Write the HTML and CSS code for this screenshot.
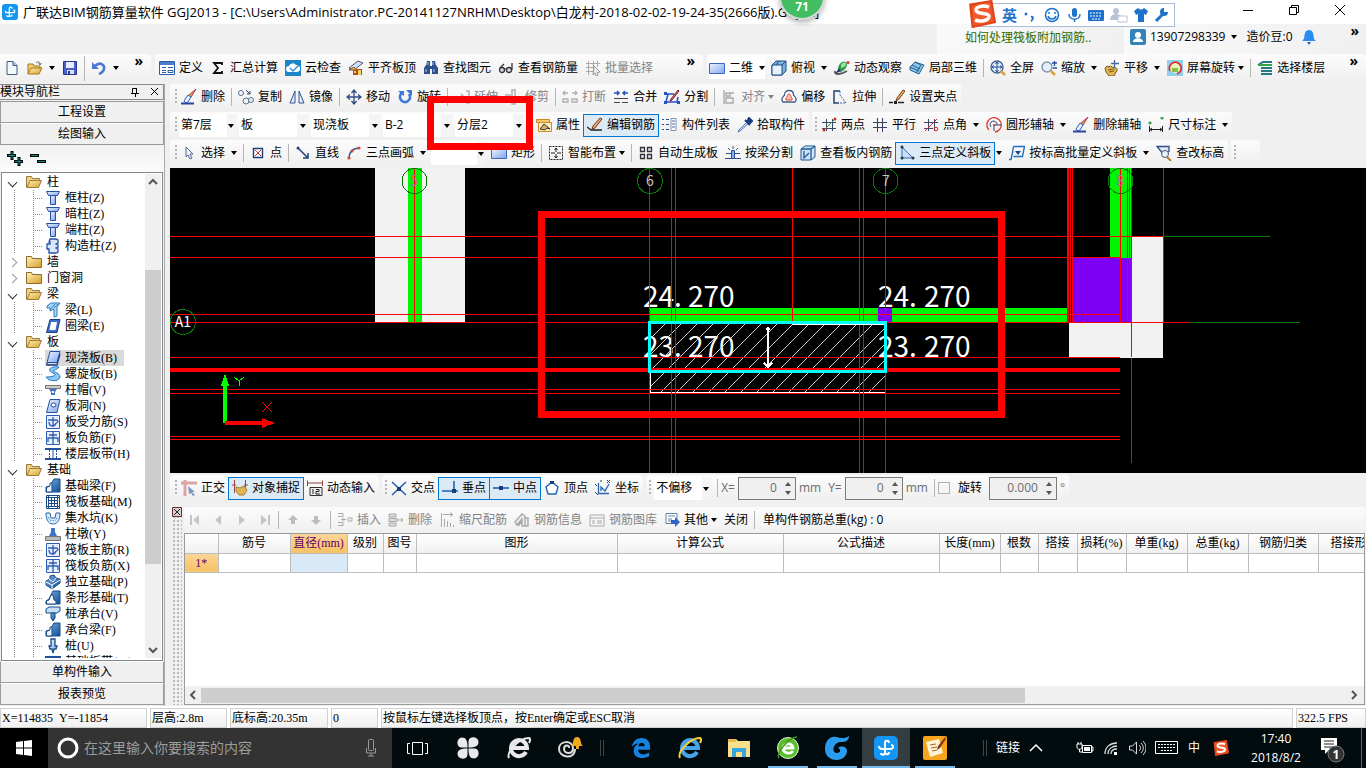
FILE: index.html
```html
<!DOCTYPE html>
<html lang="zh-CN">
<head>
<meta charset="utf-8">
<title>广联达BIM钢筋算量软件 GGJ2013</title>
<link rel="stylesheet" href="styles.css">
</head>
<body>
<svg class="defs" aria-hidden="true">
<defs>
<linearGradient id="gb" x1="0" y1="0" x2="1" y2="1"><stop offset="0" stop-color="#eef4ff"/><stop offset="1" stop-color="#7ea6ee"/></linearGradient>
<linearGradient id="gy" x1="0" y1="0" x2="1" y2="1"><stop offset="0" stop-color="#fff0b8"/><stop offset="1" stop-color="#d9a02c"/></linearGradient>
<linearGradient id="gd" x1="0" y1="0" x2="1" y2="1"><stop offset="0" stop-color="#7fb0e6"/><stop offset="1" stop-color="#124d94"/></linearGradient>
<symbol id="app" viewBox="0 0 24 24"><rect width="24" height="24" rx="5" fill="#1496f5"/><path d="M15 7c0-3-4-3-4 0v9c0 4-4 3-4 1M11 16c0 3 4 3 4 0M5 10c0 2 1 3 3 3h8c4 0 4-4 1-4" fill="none" stroke="#fff" stroke-width="2"/></symbol>
<symbol id="new" viewBox="0 0 16 16"><path d="M3 1.500h6l4 4v9H3z" fill="#f4f8ff" stroke="#41587f"/><path d="M9 1.500v4h4" fill="#b9cdec" stroke="#41587f"/></symbol>
<symbol id="open" viewBox="0 0 16 16"><path d="M1 14V4h5l1 2h6v3" fill="#f0cf74" stroke="#a87518"/><path d="M1 14l3-6h11l-3 6z" fill="url(#gy)" stroke="#a87518"/><path d="M9 3c2-2 4-1 4 1m-1.500-1l1.500 2 1.500-2" fill="none" stroke="#667"/></symbol>
<symbol id="save" viewBox="0 0 16 16"><path d="M1.500 1.500h13v13h-13z" fill="#4b5fc4" stroke="#27378f"/><path d="M4 2h8v6H4z" fill="#e6edff"/><path d="M5 10h7v4H5z" fill="#dde"/><path d="M6 11h2v3H6z" fill="#27378f"/></symbol>
<symbol id="undo" viewBox="0 0 16 16"><path d="M4 6c5-5 10-1 9 3-.5 3-3 4-5 5" fill="none" stroke="#4a76d4" stroke-width="2.500"/><path d="M1 2v7h7z" fill="#4a76d4"/></symbol>
<symbol id="define" viewBox="0 0 16 16"><path d="M.5 1.500h15v13H.5z" fill="#fff" stroke="#2f5da8"/><path d="M1 2h14v3H1z" fill="#4d7ccd"/><path d="M3 7.500h4M3 10.500h4M3 12.500h4M9 7.500h5M9 10.500h5v2H9z" stroke="#2f5da8" fill="none"/></symbol>
<symbol id="sigma" viewBox="0 0 16 16"><path d="M12 5V3H4l4 5-4 5h8v-2" fill="none" stroke="#111" stroke-width="1.800"/></symbol>
<symbol id="cloud" viewBox="0 0 16 16"><path d="M0 0h16v16H0z" fill="#1d84c9"/><path d="M4 12a3 3 0 0 1 0-6 4 4 0 0 1 7-1 3.500 3.500 0 0 1 1 7z" fill="#fff"/><path d="M5 8l3 3 6-6" fill="none" stroke="#2c91d6" stroke-width="1.500"/></symbol>
<symbol id="roof" viewBox="0 0 16 16"><path d="M1 8l9-7 5 2-9 7z" fill="#cfe0ff" stroke="#555"/><path d="M5 9h9v6H5z" fill="#b5471f"/><path d="M1 10l5-3 3 3z" fill="#e8b02e" stroke="#854"/><path d="M10 10h3v5h-3zM6 11h2v2H6z" fill="#f5d458"/></symbol>
<symbol id="find" viewBox="0 0 16 16"><path d="M4 1h3v5H3zM9 1h3l1 5H9zM1 8l2-3h4v9H1zM9 5h4l2 3v6H9zM6 6h4v3H6z" fill="#2d4f8e"/><path d="M3 9v3M11 9v3M5 2v3M10 2v3" stroke="#b7cdf2"/></symbol>
<symbol id="glass" viewBox="0 0 16 16"><path d="M2 8l4-4M14 3v7" stroke="#333" stroke-width="1.300" fill="none"/><circle cx="4" cy="10" r="2.500" fill="#dde" stroke="#333" stroke-width="1.300"/><circle cx="11" cy="10" r="2.500" fill="#dde" stroke="#333" stroke-width="1.300"/><path d="M6 9h3" stroke="#333"/></symbol>
<symbol id="batch" viewBox="0 0 16 16"><path d="M1 3.500h14M1 7.500h9M1 11.500h7M3.500 1v14M8.500 1v14M12.500 1v6" stroke="#aaa" fill="none"/><path d="M9 6l6 6-3 .5 1 3-2 .5-1-3-2 2z" fill="#eee" stroke="#999"/></symbol>
<symbol id="plane" viewBox="0 0 16 16"><path d="M.5 3.500h15v10H.5z" fill="url(#gb)" stroke="#3d66c2"/></symbol>
<symbol id="cube" viewBox="0 0 16 16"><path d="M1 5l4-4h10v10l-4 4H1z" fill="#79b2e0" stroke="#1d4f80"/><path d="M1 5h10v10H1z" fill="#e5f2fc" stroke="#1d4f80"/><path d="M11 5l4-4M5 5l3-4" stroke="#1d4f80"/></symbol>
<symbol id="orbit" viewBox="0 0 16 16"><path d="M4 9c0-5 5-9 8-7 3 3-1 9-6 10z" fill="#2fa04a"/><path d="M7 5c2-3 5-3 5-1s-2 3-5 4z" fill="#9be3a0"/><path d="M1 11c-1 5 7 3 12 0" stroke="#555" stroke-width="1.800" fill="none"/><path d="M1 14l4-6 2 3z" fill="#337"/><circle cx="14" cy="2.500" r="1.500" fill="#d33"/></symbol>
<symbol id="local" viewBox="0 0 16 16"><path d="M1 7l5-5 9 3-5 9-9-4z" fill="#8cc3e8" stroke="#24618f"/><path d="M3 5l8 4M6 2l6 3-5 8M1 7l9 4" stroke="#24618f" fill="none"/></symbol>
<symbol id="full" viewBox="0 0 16 16"><circle cx="7" cy="7" r="6" fill="#e4eefc" stroke="#46658f" stroke-width="1.400"/><path d="M11 11l4 4" stroke="#d9a23a" stroke-width="2.500"/><path d="M7 2v10M2 7h10M5.500 4L7 2l1.500 2M5.500 10L7 12l1.500-2M4 5.500L2 7l2 1.500M10 5.500L12 7l-2 1.500" stroke="#234f9b" fill="none"/></symbol>
<symbol id="zoomi" viewBox="0 0 16 16"><circle cx="6" cy="7" r="5" fill="#e4eefc" stroke="#8393aa" stroke-width="1.400"/><path d="M10 11l4 4" stroke="#d9a23a" stroke-width="2.500"/><path d="M11 3h5M13.500 1v5M12 8h4" stroke="#234f9b" stroke-width="1.300"/></symbol>
<symbol id="hand" viewBox="0 0 16 16"><path d="M1 8l2-2 2 1 1-1 2 1 4 1c2 1 1 3 0 4l-2 4H5L2 12z" fill="#dfb557" stroke="#7f5b16"/><path d="M10.500 0v8M7 3.500h8" stroke="#44689b" stroke-width="1.300"/><path d="M4 10l6-1M5 12l5-1" stroke="#7f5b16"/></symbol>
<symbol id="scr" viewBox="0 0 16 16"><path d="M0 0h16v16H0z" fill="#8fd0ef"/><circle cx="8" cy="8" r="5" fill="#e8f5b8"/><path d="M3 11A6 6 0 1 1 10 14" stroke="#e33131" stroke-width="1.800" fill="none"/><path d="M5 8h6v4H5z" fill="#8dbd3f"/></symbol>
<symbol id="floor" viewBox="0 0 16 16"><path d="M1 5l5-3h9M4 8h11M4 11h11M4 14h11" stroke="#27768a" stroke-width="2" fill="none"/><path d="M1 5h14" stroke="#38a046" stroke-width="2"/></symbol>
<symbol id="brush" viewBox="0 0 16 16"><path d="M15 0l-5 8-3-1z" fill="#f2a83d" stroke="#a34"/><path d="M10 8L7 6 3 12c1 2 3 2 4 1z" fill="#e8f0ff" stroke="#335fb5"/><path d="M0 14.500h13" stroke="#28479c" stroke-width="2"/></symbol>
<symbol id="copy" viewBox="0 0 16 16"><circle cx="3" cy="4" r="2.500" fill="none" stroke="#59728f"/><circle cx="8" cy="12" r="3" fill="none" stroke="#59728f"/><circle cx="13" cy="11" r="2.500" fill="#e6edf8" stroke="#59728f"/><path d="M8 1l4 4m0-3v3H9" fill="none" stroke="#26436d"/></symbol>
<symbol id="mirror" viewBox="0 0 16 16"><path d="M6 2v12H1zM10 2v12h5z" fill="#e5ecfb" stroke="#2f5499"/></symbol>
<symbol id="move" viewBox="0 0 16 16"><path d="M8 1v14M1 8h14M5.500 4L8 1l2.500 3M5.500 12L8 15l2.500-3M4 5.500L1 8l3 2.500M12 5.500L15 8l-3 2.500" fill="none" stroke="#2e4e83" stroke-width="1.300"/></symbol>
<symbol id="rot" viewBox="0 0 16 16"><path d="M5 4a5 5 0 1 0 7 1" fill="none" stroke="#3f78d8" stroke-width="2.800"/><path d="M9 1h6v6zM1 2h6v5z" fill="#3f78d8"/></symbol>
<symbol id="ext" viewBox="0 0 16 16"><path d="M0 8h10M7 5l3 3-3 3M12 2h3v12h-3" fill="none" stroke="#b0b0b0" stroke-width="1.500"/></symbol>
<symbol id="trim" viewBox="0 0 16 16"><path d="M0 6h5v3H0M7 1h3v14H7zM12 8h4" fill="none" stroke="#b0b0b0" stroke-width="1.500"/></symbol>
<symbol id="brk" viewBox="0 0 16 16"><path d="M1 4h5M10 4h5M3 2L1 4l2 2M13 2l2 2-2 2M1 10h5v3H1zM10 10h5v3h-5z" fill="none" stroke="#b0b0b0" stroke-width="1.300"/></symbol>
<symbol id="join" viewBox="0 0 16 16"><path d="M1 4h5M10 4h5M4 2l2 2-2 2M12 2l-2 2 2 2" fill="none" stroke="#2355b8" stroke-width="1.500"/><path d="M1 9.500h14M1 13.500h6M9 13.500h6" stroke="#444" fill="none"/></symbol>
<symbol id="split" viewBox="0 0 16 16"><path d="M1 5h9M1 13h14M4 5L2 13M14 8l-1 5" stroke="#2450c8" stroke-width="1.500" fill="none"/><path d="M14 1l-7 9-1 2 2-1 7-9z" fill="#f0a050" stroke="#713"/><path d="M0 3h3v3H0zM0 12h3v3H0zM13 12h3v3h-3z" fill="#2450c8"/></symbol>
<symbol id="align" viewBox="0 0 16 16"><path d="M3 1v14M5 9h7v5H5zM5 4h4v3H5zM13 4H9" fill="none" stroke="#aaa" stroke-width="1.400"/></symbol>
<symbol id="offset" viewBox="0 0 16 16"><path d="M2 13C-1 10 2 8 3.500 6c0-6 9-6 9 0C14 8 17 10 14 13z" fill="#fff" stroke="#3c5c8c" stroke-width="1.300"/><path d="M5 11c-1-2 1-2 1.500-4.500 0-2 3-2 3 0C10 9 12 9 11 11z" fill="#f8c5bc" stroke="#d94632"/></symbol>
<symbol id="stretch" viewBox="0 0 16 16"><path d="M8 2H2v12h5" fill="none" stroke="#23426f" stroke-width="1.500"/><path d="M8 2v4l6 8H8" fill="none" stroke="#3a69b0" stroke-dasharray="2 1"/></symbol>
<symbol id="pen" viewBox="0 0 16 16"><path d="M14 1L8 9l-1 3 3-2 6-8z" fill="#e8b35c" stroke="#7c3d20"/><path d="M0 13.500h4M9 13.500h6" stroke="#222" stroke-width="1.500"/><path d="M5 12h3v3H5z" fill="#222"/></symbol>
<symbol id="prop" viewBox="0 0 16 16"><path d="M.5 2.500h13v3H.5z" fill="#f8c870" stroke="#d08a20"/><path d="M2.500 5.500h13v9h-13z" fill="#ffeec2" stroke="#d08a20"/><path d="M4 12l4-5 6 5-3-1-2 2z" fill="#d8b269" stroke="#333"/></symbol>
<symbol id="edit" viewBox="0 0 16 16"><path d="M13 1L6 9 5 12l3-1 7-9z" fill="#efa46a" stroke="#77391d"/><path d="M0 10l4 3h11" fill="none" stroke="#222" stroke-width="1.300"/></symbol>
<symbol id="list" viewBox="0 0 16 16"><path d="M0 2.500h2M0 7.500h2M0 12.500h2M4 2.500h3M4 7.500h3M4 12.500h3" stroke="#2c4d86"/><path d="M9 1.500h5v12H9z" fill="#fff" stroke="#7d93b5"/><path d="M10 4h3M10 7h3M10 10h3" stroke="#48689c"/></symbol>
<symbol id="pick" viewBox="0 0 16 16"><path d="M10 5L2 13l-1 2 2-1 9-8" fill="#cfe3fb" stroke="#4b79b5"/><path d="M8 3l5 5M10 5l2-4 3 3-3 3z" stroke="#1f3e79" stroke-width="2" fill="#1f3e79"/></symbol>
<symbol id="two" viewBox="0 0 16 16"><path d="M5.500 2v12M11.500 2v12M1 5.500h14M1 11.500h14" stroke="#3a4a66"/><path d="M2 14L14 2" stroke="#1f9a30"/><circle cx="3" cy="13" r="1.500" fill="#d22"/><circle cx="14" cy="2" r="1.500" fill="#d22"/></symbol>
<symbol id="par" viewBox="0 0 16 16"><path d="M5.500 1v14M10.500 1v14M1 5.500h14M1 10.500h14" stroke="#34435f"/></symbol>
<symbol id="ang" viewBox="0 0 16 16"><path d="M5.500 2v12M11.500 2v12M1 5.500h14M1 11.500h9" stroke="#3a4a66"/><path d="M2 14L14 2" stroke="#d22"/><circle cx="13" cy="12" r="1.800" fill="none" stroke="#d22"/></symbol>
<symbol id="circ" viewBox="0 0 16 16"><path d="M3 13A7.200 7.200 0 1 1 9 15" fill="none" stroke="#dd3a32" stroke-width="1.300"/><path d="M8 8h7M8 8v6" stroke="#263f6b"/><path d="M5 10a3.500 3.500 0 1 1 6-2" fill="none" stroke="#263f6b"/><circle cx="8" cy="8" r="1" fill="#dd3a32"/></symbol>
<symbol id="dim" viewBox="0 0 16 16"><path d="M1.500 9v6M14.500 9v6M2 12.500h12" stroke="#222" fill="none"/><path d="M1 5h2v2H1zM13 0h2v2h-2z" fill="#42a05a" stroke="#42a05a"/><path d="M4 11l-2 1.500L4 14M12 11l2 1.500-2 1.500" fill="none" stroke="#222"/></symbol>
<symbol id="arrow" viewBox="0 0 16 16"><path d="M5 2v10l2-2 2 4 2-1-2-4h3z" fill="#eef3fb" stroke="#52688c"/></symbol>
<symbol id="pt" viewBox="0 0 16 16"><path d="M3.500 3.500h9v9h-9z" fill="#fff" stroke="#1e3c78" stroke-width="1.400"/><path d="M5 5l6 6M11 5l-6 6" stroke="#c33"/></symbol>
<symbol id="line" viewBox="0 0 16 16"><path d="M3 3l9 9M8 13h5V8" stroke="#20427d" stroke-width="1.500" fill="none"/><circle cx="3" cy="3" r="1.500" fill="#20427d"/></symbol>
<symbol id="arc" viewBox="0 0 16 16"><path d="M3 14C3 7 7 3 14 3" stroke="#3a5c92" stroke-width="1.500" fill="none"/><circle cx="3" cy="13" r="1.600" fill="#d34a3a"/><circle cx="6" cy="6" r="1.600" fill="#d34a3a"/><circle cx="13" cy="3" r="1.600" fill="#d34a3a"/></symbol>
<symbol id="smart" viewBox="0 0 16 16"><path d="M1.500 1.500h13v13h-13z" fill="none" stroke="#222" stroke-dasharray="2 1"/><path d="M8 3v4M8 9v4M3 8h4M9 8h4M6.500 5L8 3l1.500 2M6.500 11L8 13l1.500-2" stroke="#222" fill="none"/></symbol>
<symbol id="auto" viewBox="0 0 16 16"><path d="M2.500 2.500h4v4h-4zM9.500 2.500h4v4h-4zM2.500 9.500h4v4h-4zM9.500 9.500h4v4h-4z" fill="#dce9ff" stroke="#333" stroke-width="1.300"/></symbol>
<symbol id="beam" viewBox="0 0 16 16"><path d="M1 8.500h5M10 8.500h5M0 13.500h16" stroke="#2c4f94"/><path d="M6.500 5.500h3v8h-3z" fill="#8ab0ec" stroke="#2c4f94"/><path d="M3 3l2 2M13 3l-2 2M8 1v3" stroke="#2c4f94"/></symbol>
<symbol id="view" viewBox="0 0 16 16"><path d="M1 4l4-3h10v11l-4 3H1z" fill="#cfe2f7" stroke="#1e5a96"/><path d="M1 4h10v11M11 4l4-3M4 6v7l5-5" fill="none" stroke="#1e5a96" stroke-width="1.300"/></symbol>
<symbol id="slope" viewBox="0 0 16 16"><path d="M3 2v11h11z" fill="#c9defa" stroke="#3a6cb7"/><circle cx="3" cy="2" r="1.500" fill="#234"/><circle cx="3" cy="13" r="1.500" fill="#234"/><circle cx="14" cy="13" r="1.500" fill="#234"/></symbol>
<symbol id="lvl" viewBox="0 0 16 16"><path d="M4.500 1.500h11l-2 10h-9M4.500 1.500L3 10M0 14.500h2l2-9" fill="none" stroke="#2272c3" stroke-width="1.400"/><path d="M6 6h6l-3 4z" fill="#174a88"/></symbol>
<symbol id="chk" viewBox="0 0 16 16"><path d="M1 1.500h12v5L8 10z" fill="#dfe8f6" stroke="#32508a" stroke-width="1.300"/><circle cx="9" cy="9" r="3.500" fill="#e8f3ff" stroke="#556"/><path d="M11 12l4 4" stroke="#b3762a" stroke-width="2"/></symbol>
<symbol id="orth" viewBox="0 0 16 16"><path d="M0 3h16M4 0v16" stroke="#d9a5a5" stroke-width="3"/><path d="M7 6l7 6-3 0 3 3-2 1-2-3-2 1z" fill="#7f97bd"/></symbol>
<symbol id="snap" viewBox="0 0 16 16"><path d="M2.500 0v13M13.500 0v10M0 5h4M12 5h4" stroke="#944" fill="none"/><path d="M4 7l4 1 4-2 3 4-3 5H7l-3-4z" fill="#dfb557" stroke="#a88030"/></symbol>
<symbol id="dyn" viewBox="0 0 16 16"><path d="M.5 6V.5M15.500 6V.5M1 3h14" stroke="#844" fill="none"/><path d="M3 7.500h12v8H3z" fill="#eee" stroke="#333"/><path d="M6 9v5M9 9.500h3v2H9V14h4" stroke="#222" fill="none"/></symbol>
<symbol id="ix" viewBox="0 0 16 16"><path d="M1 2l14 13M15 2L1 15" stroke="#2463b4" stroke-width="1.600"/><path d="M6 7h4v4H6z" fill="#183d7a"/></symbol>
<symbol id="perp" viewBox="0 0 16 16"><path d="M0 11h16M12 1v11" stroke="#2463b4" stroke-width="1.600"/><path d="M10 9h4v4h-4z" fill="#183d7a"/></symbol>
<symbol id="mid" viewBox="0 0 16 16"><path d="M0 8h16" stroke="#2463b4" stroke-width="1.600"/><path d="M6 6h4v4H6z" fill="#183d7a"/></symbol>
<symbol id="vert" viewBox="0 0 16 16"><path d="M8 2l6 5-2 7H4L2 7z" fill="#fff" stroke="#2463b4" stroke-width="1.400"/><path d="M6 1h4v3H6z" fill="#183d7a"/></symbol>
<symbol id="coord" viewBox="0 0 16 16"><path d="M3.500 3v10.500H14M6 11V7l4 4 4-7" fill="none" stroke="#2463b4" stroke-width="1.300"/><path d="M12 0l3 3M15 0l-3 3M0 4l2 2M0 12l3 3M6 0v2" stroke="#345"/></symbol>
<symbol id="first" viewBox="0 0 16 16"><path d="M3 3h2v10H3zM12 3v10L6 8z" fill="#c4c4c4"/></symbol>
<symbol id="prev" viewBox="0 0 16 16"><path d="M11 3v10L5 8z" fill="#c4c4c4"/></symbol>
<symbol id="next" viewBox="0 0 16 16"><path d="M6 3v10l6-5z" fill="#c4c4c4"/></symbol>
<symbol id="last" viewBox="0 0 16 16"><path d="M12 3h2v10h-2zM5 3v10l6-5z" fill="#c4c4c4"/></symbol>
<symbol id="up" viewBox="0 0 16 16"><path d="M8 3l5 5h-3v4H6V8H3z" fill="#bdbdbd"/></symbol>
<symbol id="down" viewBox="0 0 16 16"><path d="M8 13l5-5h-3V4H6v4H3z" fill="#bdbdbd"/></symbol>
<symbol id="ins" viewBox="0 0 16 16"><path d="M1 1.500h5v3H1M1 10.500h5v3H1M4 7.500h5m-2-2l-2 2 2 2M11 6h4v3h-4z" fill="none" stroke="#aaa"/></symbol>
<symbol id="del" viewBox="0 0 16 16"><path d="M1 2h7v3H1zM1 11h7v3H1zM1 6.500h8v3H1z" fill="#ddd" stroke="#aaa"/><path d="M9 8h6m-2-2l2 2-2 2" fill="none" stroke="#aaa"/></symbol>
<symbol id="scale" viewBox="0 0 16 16"><path d="M2.500 1v14M4 2.500h10m-3-2l3 2-3 2M5.500 7v8M8.500 9v6M11.500 11v4M14.500 13v2" fill="none" stroke="#aaa"/></symbol>
<symbol id="info" viewBox="0 0 16 16"><path d="M1 10L8 2l3 2v10H8V7l-5 6zM4 14L8 9M11 6h3v8h-3" fill="#eee" stroke="#aaa" stroke-width="1.400"/></symbol>
<symbol id="lib" viewBox="0 0 16 16"><path d="M1 3h14v11H1zM1 6h14M3 9h3M8 9h5M3 11h3M8 11h5" fill="none" stroke="#aaa"/></symbol>
<symbol id="other" viewBox="0 0 16 16"><path d="M2 1.500h11v10H2zM4 4h7M4 7h4M4 9h4" fill="#fff" stroke="#6680a5"/><path d="M7 8h4V5l5 5-5 5v-3H7z" fill="#2f63c5"/></symbol>
<symbol id="fo" viewBox="0 0 16 16"><path d="M.5 13.500v-11h5l1 2h7v3" fill="#ecd08a" stroke="#9a7a35"/><path d="M1 13.500l3-7h11.500l-3 7z" fill="url(#gy)" stroke="#9a7a35"/></symbol>
<symbol id="fc" viewBox="0 0 16 16"><path d="M.5 13.500v-11h5l1 2h9v9z" fill="url(#gy)" stroke="#8c6c2a"/></symbol>
<symbol id="col" viewBox="0 0 16 16"><path d="M1.500 1.500h13l-2 4h-9z" fill="url(#gb)" stroke="#2450a0"/><path d="M5.500 5.500h5v9h-5z" fill="url(#gb)" stroke="#2450a0"/></symbol>
<symbol id="gz" viewBox="0 0 16 16"><path d="M5 1h6l2 1v3l-2 1 2 1v2l-2 1 2 1v3l-2 1H4v-4H2V6h3V4H4z" fill="#dbe6fa" stroke="#2450a0" stroke-width="1.300"/></symbol>
<symbol id="liang" viewBox="0 0 16 16"><path d="M2 4l4-3h9l-3 4v9l-3 1V7L5 9V6H2z" fill="#a8d6f5" stroke="#2b7fc4"/><path d="M5 8l5-6M9 6l4-4" stroke="#2b7fc4"/></symbol>
<symbol id="ring" viewBox="0 0 16 16"><path d="M5 1.500h10l-3 13H1.500z" fill="#3f6fc4" stroke="#173e8c"/><path d="M6 4h6l-1.500 8H4.500z" fill="#fff"/></symbol>
<symbol id="slab" viewBox="0 0 16 16"><path d="M5 1.500h10l-3 11H2z" fill="url(#gb)" stroke="#2450a0"/><path d="M2 13v2h10l3-11" fill="none" stroke="#173e8c" stroke-width="1.300"/></symbol>
<symbol id="spiral" viewBox="0 0 16 16"><path d="M14 1C7 0 2 3 6 6l4 2c1 2-4 3-9 3 3 5 13 5 14 0 0-4-6-5-7-6 0-1 4-1 6-4z" fill="#8cc9f2" stroke="#2674bc"/></symbol>
<symbol id="cap" viewBox="0 0 16 16"><path d="M.5 3.500h15v3H.500z" fill="#ccc" stroke="#777"/><path d="M4 7h8l-2 3v3H6v-3z" fill="#3e73ca"/><path d="M7 9h2v2H7z" fill="#fff"/></symbol>
<symbol id="hole" viewBox="0 0 16 16"><path d="M5 1.500h10l-3 13H1.500z" fill="url(#gb)" stroke="#2450a0"/><ellipse cx="8.500" cy="7" rx="2.500" ry="2" fill="#fff" stroke="#2450a0"/></symbol>
<symbol id="bar1" viewBox="0 0 16 16"><path d="M1.500 1.500h13v13h-13z" fill="#e8f0fe" stroke="#2d5cb5"/><path d="M8 3v10M3 6h8c3 0 2 3 0 3M4 8c0 5 6 5 7 1" fill="none" stroke="#2d5cb5" stroke-width="1.300"/></symbol>
<symbol id="bar2" viewBox="0 0 16 16"><path d="M1.500 1.500h13v13h-13z" fill="#e8f0fe" stroke="#2d5cb5"/><path d="M8 2v12M4 5h8M3 12V8h10v4" fill="none" stroke="#2d5cb5" stroke-width="1.300"/></symbol>
<symbol id="strip" viewBox="0 0 16 16"><path d="M0 3h16M0 13h16" stroke="#2450a0" stroke-width="2"/><path d="M4.500 4v8M11.500 4v8" stroke="#2450a0" stroke-dasharray="2 1"/><path d="M8 4v8" stroke="#2450a0"/></symbol>
<symbol id="fb" viewBox="0 0 16 16"><path d="M1 14V9l4-1 4-7h6v13z" fill="url(#gd)" stroke="#164b88"/><path d="M1.500 14V9.500L5 8v-3h2v9z" fill="#e9f2fd" stroke="#164b88"/></symbol>
<symbol id="raft" viewBox="0 0 16 16"><path d="M1.500 1.500h13v13h-13z" fill="#fff" stroke="#164b88"/><path d="M3.500 1v14M12.500 1v14M1 3.500h14M1 12.500h14M6.500 4v8M9.500 4v8M4 6.500h8M4 9.500h8" stroke="#164b88" fill="none"/></symbol>
<symbol id="pit" viewBox="0 0 16 16"><path d="M1 3h4l1 5h4l1-5h4c0 6-2 11-7 11S1 9 1 3z" fill="#d8ebfa" stroke="#2867b0"/><path d="M3 7l3 4M8 10v2M12 8l-2 3" stroke="#2867b0" stroke-dasharray="1 1"/></symbol>
<symbol id="pier" viewBox="0 0 16 16"><path d="M.5 10.500h15v4H.5z" fill="#bbb" stroke="#777"/><path d="M6 2h4v4l2 4H4l2-4z" fill="#3e73ca"/></symbol>
<symbol id="iso" viewBox="0 0 16 16"><path d="M1 7l4-2V2l4-1 2 3 4 1v4l-8 6-6-4z" fill="url(#gd)" stroke="#164b88"/><path d="M1 8l6 3 8-5M7 11v4M4 5l4 3 3-4" stroke="#fff" fill="none"/></symbol>
<symbol id="tf" viewBox="0 0 16 16"><path d="M1 14v-3l3-2 4-8h7v13z" fill="url(#gd)" stroke="#164b88"/><path d="M1.500 14v-3L4 10l2-5h2l1 5 2 1v3z" fill="#fff" stroke="#164b88"/></symbol>
<symbol id="pilecap" viewBox="0 0 16 16"><path d="M1 3l3-2h11v4l-3 2H1z" fill="#c6dcf6" stroke="#164b88"/><path d="M6 7h4v5l-2 3-2-3z" fill="url(#gd)" stroke="#164b88"/></symbol>
<symbol id="pile" viewBox="0 0 16 16"><path d="M6 1h4v7h2l-1 3H9l-1 4-1-4H5L4 8h2z" fill="url(#gb)" stroke="#164b88" stroke-width="1.300"/></symbol>
<symbol id="sogou" viewBox="0 0 24 24"><path d="M2 4L20 1l3 18-19 4z" fill="#f1582a" stroke="#e2451b" stroke-width="2"/><path d="M18 6c-6-2-12 0-11 3 1 4 11 1 11 5 0 4-8 5-12 3" fill="none" stroke="#fff" stroke-width="3"/></symbol>
<symbol id="ie" viewBox="0 0 24 24"><path d="M19 16a8 8 0 1 1 1-4H6" fill="none" stroke="currentColor" stroke-width="4"/><path d="M2 22C-1 16 12 2 22 2c2 1 1 3 0 5" fill="none" stroke="var(--ring,currentColor)" stroke-width="2"/></symbol>
<symbol id="edge" viewBox="0 0 24 24"><path d="M2 11C3 3 9 1 13 1c6 0 9 4 9 11v2H9c0 6 7 6 12 3v4c-8 4-17 2-17-6 0-4 2-6 5-8C6 7 3 9 2 11zm7-1h7c0-5-6-5-7 0z" fill="#1683e0"/></symbol>
</defs>
</svg>

<div class="window">
<header class="titlebar">
  <svg class="i"><use href="#app"/></svg>
  <h1>广联达BIM钢筋算量软件 GGJ2013 - [C:\Users\Administrator.PC-20141127NRHM\Desktop\白龙村-2018-02-02-19-24-35(2666版).GGJ12]</h1>
  <span class="speed">71</span>
  <div class="ime">
    <svg class="ime-logo"><use href="#sogou"/></svg>
    <b>英</b>
    <svg width="16" height="16"><circle cx="4" cy="7" r="1.500" fill="#1d73c9"/><path d="M9 10c3-1 2 3 0 4" stroke="#1d73c9" stroke-width="2" fill="none"/></svg>
    <svg width="18" height="16"><circle cx="9" cy="8" r="6.500" fill="none" stroke="#1d73c9" stroke-width="1.500"/><path d="M6 5v2M12 5v2M5 9c1 4 7 4 8 0" fill="none" stroke="#1d73c9" stroke-width="1.500"/></svg>
    <svg width="16" height="16"><rect x="6" y="1" width="5" height="9" rx="2.500" fill="#1d73c9"/><path d="M3 7c0 7 11 7 11 0M8.500 12v3" stroke="#1d73c9" stroke-width="1.500" fill="none"/></svg>
    <svg width="18" height="16"><rect x="1" y="3" width="16" height="11" rx="1" fill="#1d73c9"/><path d="M3 6h12M3 9h12M5 12h8" stroke="#fff" stroke-dasharray="2 1"/></svg>
    <svg width="18" height="16"><circle cx="6" cy="4" r="3" fill="#b9c3d3"/><path d="M0 13c0-8 12-8 12 0z" fill="#b9c3d3"/><path d="M8 9h9v6H8z" fill="#fff" stroke="#b9c3d3"/></svg>
    <svg width="16" height="16"><path d="M1 4l4-3c2 2 4 2 6 0l4 3-2 4-2-1v8H5V7L3 8z" fill="#1d73c9"/></svg>
    <svg width="16" height="16"><path d="M2 14l7-7" stroke="#1d73c9" stroke-width="3"/><path d="M14 5a4 4 0 1 1-4-4L10 5z" fill="#1d73c9"/></svg>
  </div>
  <div class="winbtns">
    <button aria-label="最小化"><svg width="12" height="12"><path d="M1 6.500h10" stroke="#000"/></svg></button>
    <button aria-label="还原"><svg width="12" height="12"><path d="M1.500 3.500h7v7h-7zM3.500 3V1.500h7v7H9" stroke="#000" fill="none"/></svg></button>
    <button aria-label="关闭"><svg width="12" height="12"><path d="M1 1l10 10M11 1L1 11" stroke="#000" fill="none"/></svg></button>
  </div>
</header>

<div class="account">
  <a class="tip" href="#">如何处理筏板附加钢筋..</a>
  <div class="user">
    <svg class="i" viewBox="0 0 16 16"><rect width="16" height="16" rx="2" fill="#3483b8"/><circle cx="8" cy="6" r="3" fill="#fff"/><path d="M3 13c0-5 10-5 10 0z" fill="#fff"/></svg>
    <button class="t drop">13907298339</button>
    <span>造价豆:0</span>
    <svg class="i" viewBox="0 0 16 16"><path d="M1 12c3-2 2-5 3-8 1-4 7-4 8 0 1 3 0 6 3 8z" fill="#2b8cf0"/><path d="M6 13h4l-2 3z" fill="#2465b5"/></svg>
    <button class="more">»</button>
  </div>
</div>

<div class="mainbar">
  <div class="tb file">
    <button class="t" aria-label="新建"><svg class="i"><use href="#new"/></svg></button>
    <button class="t drop" aria-label="打开"><svg class="i"><use href="#open"/></svg></button>
    <button class="t" aria-label="保存"><svg class="i"><use href="#save"/></svg></button>
    <i class="sep"></i>
    <button class="t drop" aria-label="撤销"><svg class="i"><use href="#undo"/></svg></button>
    <button class="more">»</button>
  </div>
  <div class="tb tools">
    <button class="t"><svg class="i"><use href="#define"/></svg>定义</button>
    <button class="t"><svg class="i"><use href="#sigma"/></svg>汇总计算</button>
    <button class="t"><svg class="i"><use href="#cloud"/></svg>云检查</button>
    <button class="t"><svg class="i"><use href="#roof"/></svg>平齐板顶</button>
    <button class="t"><svg class="i"><use href="#find"/></svg>查找图元</button>
    <button class="t"><svg class="i"><use href="#glass"/></svg>查看钢筋量</button>
    <button class="t off"><svg class="i"><use href="#batch"/></svg>批量选择</button>
    <button class="more">»</button>
  </div>
  <div class="tb views">
    <button class="t drop white"><svg class="i"><use href="#plane"/></svg>二维</button>
    <button class="t drop"><svg class="i"><use href="#cube"/></svg>俯视</button>
    <button class="t"><svg class="i"><use href="#orbit"/></svg>动态观察</button>
    <button class="t"><svg class="i"><use href="#local"/></svg>局部三维</button>
    <i class="sep"></i>
    <button class="t"><svg class="i"><use href="#full"/></svg>全屏</button>
    <button class="t drop"><svg class="i"><use href="#zoomi"/></svg>缩放</button>
    <button class="t drop"><svg class="i"><use href="#hand"/></svg>平移</button>
    <button class="t drop tight"><svg class="i"><use href="#scr"/></svg>屏幕旋转</button>
    <i class="sep"></i>
    <button class="t"><svg class="i"><use href="#floor"/></svg>选择楼层</button>
    <button class="more">»</button>
  </div>
</div>

<div class="body">
<aside class="nav">
  <div class="nav-head"><h2>模块导航栏</h2>
    <button aria-label="固定"><svg width="10" height="10"><path d="M2.500 6V1.500h4V6M1 6.500h8M5.500 7v3M6.500 1v5" stroke="#000" fill="none"/></svg></button>
    <button aria-label="关闭"><svg width="10" height="10"><path d="M1 1l7 7M8 1L1 8" stroke="#000" fill="none"/></svg></button>
  </div>
  <button class="tab">工程设置</button>
  <button class="tab">绘图输入</button>
  <div class="treebar">
    <button aria-label="全部展开"><svg width="18" height="16"><path d="M5 0v9M0 4.500h9M12 6v9M7 10.500h9" stroke="#000" stroke-width="3"/><path d="M5 1v7M1 4.500h7M12 7v7M8 10.500h7" stroke="#0a8a80"/></svg></button>
    <button aria-label="全部折叠"><svg width="18" height="16"><path d="M1 4.500h9M8 10.500h9" stroke="#000" stroke-width="3"/><path d="M2 4.500h7M9 10.500h7" stroke="#0a8a80"/></svg></button>
  </div>
  <div class="treebox">
    <div class="tree">
      <div class="g open"><svg class="i"><use href="#fo"/></svg>柱</div>
      <ul>
        <li><svg class="i"><use href="#col"/></svg>框柱(Z)</li>
        <li><svg class="i"><use href="#col"/></svg>暗柱(Z)</li>
        <li><svg class="i"><use href="#col"/></svg>端柱(Z)</li>
        <li><svg class="i"><use href="#gz"/></svg>构造柱(Z)</li>
      </ul>
      <div class="g"><svg class="i"><use href="#fc"/></svg>墙</div>
      <div class="g"><svg class="i"><use href="#fc"/></svg>门窗洞</div>
      <div class="g open"><svg class="i"><use href="#fo"/></svg>梁</div>
      <ul>
        <li><svg class="i"><use href="#liang"/></svg>梁(L)</li>
        <li><svg class="i"><use href="#ring"/></svg>圈梁(E)</li>
      </ul>
      <div class="g open"><svg class="i"><use href="#fo"/></svg>板</div>
      <ul>
        <li><span class="cur"><svg class="i"><use href="#slab"/></svg>现浇板(B)</span></li>
        <li><svg class="i"><use href="#spiral"/></svg>螺旋板(B)</li>
        <li><svg class="i"><use href="#cap"/></svg>柱帽(V)</li>
        <li><svg class="i"><use href="#hole"/></svg>板洞(N)</li>
        <li><svg class="i"><use href="#bar1"/></svg>板受力筋(S)</li>
        <li><svg class="i"><use href="#bar2"/></svg>板负筋(F)</li>
        <li><svg class="i"><use href="#strip"/></svg>楼层板带(H)</li>
      </ul>
      <div class="g open"><svg class="i"><use href="#fo"/></svg>基础</div>
      <ul>
        <li><svg class="i"><use href="#fb"/></svg>基础梁(F)</li>
        <li><svg class="i"><use href="#raft"/></svg>筏板基础(M)</li>
        <li><svg class="i"><use href="#pit"/></svg>集水坑(K)</li>
        <li><svg class="i"><use href="#pier"/></svg>柱墩(Y)</li>
        <li><svg class="i"><use href="#bar1"/></svg>筏板主筋(R)</li>
        <li><svg class="i"><use href="#bar2"/></svg>筏板负筋(X)</li>
        <li><svg class="i"><use href="#iso"/></svg>独立基础(P)</li>
        <li><svg class="i"><use href="#tf"/></svg>条形基础(T)</li>
        <li><svg class="i"><use href="#pilecap"/></svg>桩承台(V)</li>
        <li><svg class="i"><use href="#fb"/></svg>承台梁(F)</li>
        <li><svg class="i"><use href="#pile"/></svg>桩(U)</li>
        <li><svg class="i"><use href="#strip"/></svg>基础板带(W)</li>
      </ul>
    </div>
    <div class="vscroll">
      <svg width="16" height="16"><path d="M4 10l4-4 4 4" fill="none" stroke="#555" stroke-width="2"/></svg>
      <div class="vtrack"><div class="vthumb"></div></div>
      <svg width="16" height="16"><path d="M4 6l4 4 4-4" fill="none" stroke="#555" stroke-width="2"/></svg>
    </div>
  </div>
  <button class="tab">单构件输入</button>
  <button class="tab">报表预览</button>
</aside>

<main class="work">
<div class="bars">
  <div class="row">
    <div class="tb"><i class="grip"></i>
      <button class="t"><svg class="i"><use href="#brush"/></svg>删除</button>
      <i class="sep"></i>
      <button class="t"><svg class="i"><use href="#copy"/></svg>复制</button>
      <button class="t"><svg class="i"><use href="#mirror"/></svg>镜像</button>
      <i class="sep"></i>
      <button class="t"><svg class="i"><use href="#move"/></svg>移动</button>
      <button class="t"><svg class="i"><use href="#rot"/></svg>旋转</button>
      <i class="sep"></i>
      <button class="t off"><svg class="i"><use href="#ext"/></svg>延伸</button>
      <button class="t off"><svg class="i"><use href="#trim"/></svg>修剪</button>
      <i class="sep"></i>
      <button class="t off"><svg class="i"><use href="#brk"/></svg>打断</button>
      <button class="t"><svg class="i"><use href="#join"/></svg>合并</button>
      <button class="t"><svg class="i"><use href="#split"/></svg>分割</button>
      <i class="sep"></i>
      <button class="t off drop tight"><svg class="i"><use href="#align"/></svg>对齐</button>
      <button class="t"><svg class="i"><use href="#offset"/></svg>偏移</button>
      <button class="t"><svg class="i"><use href="#stretch"/></svg>拉伸</button>
      <i class="sep"></i>
      <button class="t"><svg class="i"><use href="#pen"/></svg>设置夹点</button>
    </div>
  </div>
  <div class="row">
    <div class="tb"><i class="grip"></i>
      <div class="combos">
        <span class="combo short"><select aria-label="楼层"><option>第7层</option></select></span>
        <span class="combo"><select aria-label="构件类型"><option>板</option></select></span>
        <span class="combo"><select aria-label="构件"><option>现浇板</option></select></span>
        <span class="combo"><select aria-label="名称"><option>B-2</option></select></span>
        <span class="combo"><select aria-label="分层"><option>分层2</option></select></span>
      </div>
      <button class="t"><svg class="i"><use href="#prop"/></svg>属性</button>
      <button class="t on"><svg class="i"><use href="#edit"/></svg>编辑钢筋</button>
      <button class="t"><svg class="i"><use href="#list"/></svg>构件列表</button>
      <button class="t"><svg class="i"><use href="#pick"/></svg>拾取构件</button>
    </div>
    <div class="tb"><i class="grip"></i>
      <button class="t"><svg class="i"><use href="#two"/></svg>两点</button>
      <button class="t"><svg class="i"><use href="#par"/></svg>平行</button>
      <button class="t drop"><svg class="i"><use href="#ang"/></svg>点角</button>
      <button class="t drop"><svg class="i"><use href="#circ"/></svg>圆形辅轴</button>
      <button class="t"><svg class="i"><use href="#brush"/></svg>删除辅轴</button>
      <button class="t drop"><svg class="i"><use href="#dim"/></svg>尺寸标注</button>
    </div>
  </div>
  <div class="row">
    <div class="tb"><i class="grip"></i>
      <button class="t drop"><svg class="i"><use href="#arrow"/></svg>选择</button>
      <i class="sep"></i>
      <button class="t"><svg class="i"><use href="#pt"/></svg>点</button>
      <i class="sep"></i>
      <button class="t"><svg class="i"><use href="#line"/></svg>直线</button>
      <button class="t drop"><svg class="i"><use href="#arc"/></svg>三点画弧</button>
      <span class="combo blank"><select aria-label="画法"><option></option></select></span>
      <button class="t"><svg class="i"><use href="#plane"/></svg>矩形</button>
      <i class="sep"></i>
      <button class="t drop tight"><svg class="i"><use href="#smart"/></svg>智能布置</button>
      <i class="sep"></i>
      <button class="t"><svg class="i"><use href="#auto"/></svg>自动生成板</button>
      <button class="t"><svg class="i"><use href="#beam"/></svg>按梁分割</button>
      <button class="t"><svg class="i"><use href="#view"/></svg>查看板内钢筋</button>
      <button class="t on"><svg class="i"><use href="#slope"/></svg>三点定义斜板</button>
      <button class="t drop only" aria-label="更多斜板"></button>
      <button class="t drop"><svg class="i"><use href="#lvl"/></svg>按标高批量定义斜板</button>
      <button class="t"><svg class="i"><use href="#chk"/></svg>查改标高</button>
    </div>
    <div class="tb stub"><i class="grip"></i></div>
  </div>
  <div class="mark"></div>
</div>

<svg class="canvas" viewBox="170 168 1196 305" preserveAspectRatio="xMinYMin slice" shape-rendering="crispEdges">
  <defs><pattern id="hatch" width="16" height="16" patternUnits="userSpaceOnUse" x="650" y="323"><path d="M0 16L16 0" stroke="#d0d0d0" fill="none"/></pattern></defs>
  <rect x="170" y="168" width="2400" height="600" fill="#000"/>
  <g fill="#f2f2f2"><rect x="375" y="168" width="90" height="154"/><rect x="1132" y="237" width="31" height="86"/><rect x="1069" y="323" width="94" height="35"/></g>
  <g fill="#00f500"><rect x="408" y="168" width="14" height="154"/><rect x="1110" y="168" width="22" height="90"/><rect x="650" y="308" width="418" height="14"/></g>
  <g fill="#7d00f5"><rect x="1072" y="258" width="60" height="64"/><rect x="878" y="308" width="14" height="14"/></g>
  <g fill="#fff" font-family="'Noto Sans CJK SC',sans-serif" font-size="28">
    <text x="643" y="307">24.</text><text x="688" y="307">270</text>
    <text x="643" y="357">23.</text><text x="688" y="357">270</text>
    <text x="878" y="307">24.</text><text x="924" y="307">270</text>
    <text x="878" y="357">23.</text><text x="924" y="357">270</text>
  </g>
  <path d="M650.500 323.500h235v69h-235z" fill="url(#hatch)" stroke="#fff"/>
  <g stroke="#f00" fill="none">
    <path d="M170 236.500H1163M170 257.500H1120M170 314.500H1120M170 322.500H1190M170 357.500H1120M170 389.500H1120M170 393.500H1120M170 436.500H1120M170 439.500H1120"/>
    <path d="M170 370H1120" stroke-width="4"/>
    <path d="M414.500 168V322M649.500 168V393M671.500 168V393M675.500 168V393M792.500 168V322M859.500 168V393M863.500 168V393M885.500 168V393M1070.500 168V322M1072.500 168V322M1120.500 168V322M1127.500 168V322M1129.500 168V322M1131.500 168V357M1163.500 168V322"/>
    <path d="M1068 168V322" stroke-width="2"/>
  </g>
  <g stroke="#087808" fill="none">
    <path d="M1164 236.500H1270M1190 322.500H1300M649.500 394V473M671.500 394V473M675.500 394V473M859.500 394V473M863.500 394V473M885.500 394V473M1131.500 358V463"/>
    <circle cx="414.500" cy="181" r="12.500"/><circle cx="650" cy="181" r="12.500"/><circle cx="885.500" cy="181" r="12.500"/><circle cx="1120.500" cy="181" r="12.500"/><circle cx="183" cy="322" r="12.500"/>
  </g>
  <g font-family="'Noto Sans CJK SC',sans-serif" font-size="14" text-anchor="middle" fill="#c8c8c8">
    <text x="414" y="186" fill="#b06ab0">5</text><text x="650" y="186">6</text><text x="886" y="186">7</text><text x="1120" y="186" fill="#b06ab0">8</text><text x="183" y="327" fill="#fff">A1</text>
  </g>
  <path d="M649.500 322.500H885.500V371.500H649.500z" fill="none" stroke="#0ff" stroke-width="3"/>
  <path d="M792 324.500h92" stroke="#fff"/>
  <path d="M768 327v38" stroke="#fff" stroke-width="2"/><path d="M764 363l4 4 4-4M766 329h4" stroke="#fff" fill="none" stroke-width="2"/>
  <path d="M225 423V386" stroke="#0f0" stroke-width="4"/><path d="M225 373l4 13h-8z" fill="#0f0"/>
  <path d="M225 423h37" stroke="#f00" stroke-width="4"/><path d="M275 423l-13 5v-10z" fill="#f00"/>
  <path d="M234 377l5 4 5-4M239 381v5" stroke="#0f0" fill="none"/><path d="M262 402l10 10M272 402l-10 10" stroke="#f00" fill="none"/>
  <rect x="541.500" y="214.500" width="460" height="200" fill="none" stroke="#f00" stroke-width="7"/>
</svg>

<div class="row snapbar">
  <div class="tb"><i class="grip"></i>
    <button class="t"><svg class="i"><use href="#orth"/></svg>正交</button>
    <button class="t on"><svg class="i"><use href="#snap"/></svg>对象捕捉</button>
    <button class="t"><svg class="i"><use href="#dyn"/></svg>动态输入</button>
  </div>
  <div class="tb"><i class="grip"></i>
    <button class="t"><svg class="i"><use href="#ix"/></svg>交点</button>
    <button class="t on"><svg class="i"><use href="#perp"/></svg>垂点</button>
    <button class="t on"><svg class="i"><use href="#mid"/></svg>中点</button>
    <button class="t"><svg class="i"><use href="#vert"/></svg>顶点</button>
    <button class="t"><svg class="i"><use href="#coord"/></svg>坐标</button>
  </div>
  <div class="tb offsets"><i class="grip"></i>
    <span class="combo short"><select aria-label="偏移方式"><option>不偏移</option></select></span>
    <i class="sep"></i>
    <label>X=<span class="spin"><input value="0" aria-label="X"></span>mm</label>
    <label>Y=<span class="spin"><input value="0" aria-label="Y"></span>mm</label>
    <i class="sep"></i>
    <label class="ck"><input type="checkbox">旋转</label>
    <label><span class="spin wide"><input value="0.000" aria-label="角度"></span>°</label>
  </div>
</div>

<div class="rebar">
  <div class="split"><svg width="10" height="10"><path d="M.5.500h9v9h-9z" fill="#dcc" stroke="#633"/><path d="M2 2l6 6M8 2L2 8" stroke="#222"/></svg></div>
  <div class="sheet">
    <div class="tb sheetbar">
      <button class="t nv" aria-label="首条"><svg class="i"><use href="#first"/></svg></button>
      <button class="t nv" aria-label="上一条"><svg class="i"><use href="#prev"/></svg></button>
      <button class="t nv" aria-label="下一条"><svg class="i"><use href="#next"/></svg></button>
      <button class="t nv" aria-label="末条"><svg class="i"><use href="#last"/></svg></button>
      <i class="sep"></i>
      <button class="t nv" aria-label="上移"><svg class="i"><use href="#up"/></svg></button>
      <button class="t nv" aria-label="下移"><svg class="i"><use href="#down"/></svg></button>
      <i class="sep"></i>
      <button class="t off"><svg class="i"><use href="#ins"/></svg>插入</button>
      <button class="t off"><svg class="i"><use href="#del"/></svg>删除</button>
      <button class="t off"><svg class="i"><use href="#scale"/></svg>缩尺配筋</button>
      <button class="t off"><svg class="i"><use href="#info"/></svg>钢筋信息</button>
      <button class="t off"><svg class="i"><use href="#lib"/></svg>钢筋图库</button>
      <button class="t drop tight"><svg class="i"><use href="#other"/></svg>其他</button>
      <button class="t">关闭</button>
      <i class="sep"></i>
      <span>单构件钢筋总重(kg)&nbsp;: 0</span>
    </div>
    <div class="gridbox">
      <div class="gridview">
      <table>
        <colgroup><col class="c33"><col class="c72"><col class="c57"><col class="c36"><col class="c33"><col class="c201"><col class="c166"><col class="c156"><col class="c61"><col class="c38"><col class="c39"><col class="c49"><col class="c61"><col class="c61"><col class="c70"><col class="c61"></colgroup>
        <thead><tr><th></th><th>筋号</th><th class="hot">直径(mm)</th><th>级别</th><th>图号</th><th>图形</th><th>计算公式</th><th>公式描述</th><th>长度(mm)</th><th>根数</th><th>搭接</th><th>损耗(%)</th><th>单重(kg)</th><th>总重(kg)</th><th>钢筋归类</th><th>搭接形</th></tr></thead>
        <tbody><tr><th>1*</th><td></td><td class="act"></td><td></td><td></td><td></td><td></td><td></td><td></td><td></td><td></td><td></td><td></td><td></td><td></td><td></td></tr></tbody>
      </table>
      </div>
      <div class="hscroll">
        <svg width="16" height="16"><path d="M10 4L6 8l4 4" fill="none" stroke="#555" stroke-width="2"/></svg>
        <div class="htrack"><div class="hthumb"></div></div>
        <svg width="16" height="16"><path d="M6 4l4 4-4 4" fill="none" stroke="#555" stroke-width="2"/></svg>
      </div>
    </div>
  </div>
</div>
</main>
</div>

<footer class="status">
  <span class="s1">X=114835&ensp;Y=-11854</span><span class="s2">层高:2.8m</span><span class="s3">底标高:20.35m</span><span class="s4">0</span><span class="s5">按鼠标左键选择板顶点，按Enter确定或ESC取消</span><span class="s6">322.5 FPS</span>
</footer>

<div class="taskbar">
  <button class="start" aria-label="开始"><svg width="16" height="16"><path d="M0 2l7-1v6.500H0zM8 1l8-1v7.500H8zM0 8.500h7V15l-7-1zM8 8.500h8V16l-8-1z" fill="#fff"/></svg></button>
  <div class="search">
    <svg width="24" height="24"><circle cx="12" cy="12" r="9" fill="none" stroke="#fff" stroke-width="3"/></svg>
    <input placeholder="在这里输入你要搜索的内容" aria-label="搜索">
    <svg width="12" height="18"><rect x="3.500" y=".5" width="5" height="11" rx="1" fill="none" stroke="#999"/><path d="M1.500 9v5h9V9M6 14v3M3 17h6" fill="none" stroke="#999"/></svg>
  </div>
  <div class="apps">
    <button aria-label="任务视图" class="pin"><svg width="24" height="24"><path d="M7.500 6.500h10v12h-10zM5 7.500H2.500v10H5M20 7.500h2.500v10H20" stroke="#fff" fill="none"/></svg></button>
    <button aria-label="应用" class="pin"><svg width="24" height="24"><g fill="#e9e9e9"><path d="M11.500 11.500H5C0 11 0 2 6 1.500c4 0 5.500 3 5.500 10z"/><path d="M12.500 11.500V5C13 0 22 0 22.500 6c0 4-3 5.500-10 5.500z"/><path d="M12.500 12.500H19c5 .5 5 9.500-1 10-4 0-5.500-3-5.500-10z"/><path d="M11.500 12.500V19c-.5 5-9.500 5-10-1 0-4 3-5.500 10-5.500z"/></g></svg></button>
    <button aria-label="浏览器" class="pin w"><svg width="24" height="24"><use href="#ie"/></svg></button>
    <button aria-label="通知中心" class="pin"><svg width="28" height="28"><path d="M19 15c0 11-16 9-16 0S17 6 17 14c0 7-9 6-9 1s6-4 5-1" stroke="#ddd" stroke-width="2" fill="none"/><path d="M15 12c3-1 1-9 6-9s3 8 6 9z" fill="#f0a91c"/><path d="M20 12h3v3h-3z" fill="#f0a91c"/></svg></button>
    <i class="bar2"></i>
    <button aria-label="Edge"><svg width="22" height="22"><use href="#edge"/></svg></button>
    <button aria-label="IE" class="ieb"><svg width="24" height="24"><use href="#ie"/></svg></button>
    <button aria-label="文件夹"><svg width="24" height="24"><path d="M1 3h8l2 2h12v16H1z" fill="#fbdf8b"/><path d="M1 3h8v3H1z" fill="#e9b94d"/><path d="M5 21v-9h14v9h-4v-5H9v5z" fill="#37a6de"/></svg></button>
    <button aria-label="360" class="run"><svg width="24" height="24"><circle cx="12" cy="12" r="10.500" fill="#5abd2c" stroke="#e4f5da"/><path d="M17 15c-3 4-10 2-10-3s10-6 10 0H8" fill="none" stroke="#fff" stroke-width="2.800"/><path d="M3 22C0 17 12 2 21 1" fill="none" stroke="#3f9a1c" stroke-width="1.500"/></svg></button>
    <button aria-label="G" class="run"><svg width="26" height="26"><path d="M25 1c0 5-4 6-8 6-8 0-10 11-4 11 4 0 4-4 1-5 4-3 9-1 9 3 0 5-5 9-10 9C5 25 1 20 1 14 1 6 6 1 12 2c5 1 9 2 13-1z" fill="#2a9cf0"/></svg></button>
    <button aria-label="广联达" class="run active"><svg width="24" height="24"><use href="#app"/></svg></button>
    <button aria-label="记事" class="run"><svg width="24" height="24"><rect width="24" height="24" rx="2" fill="#f4a51d"/><path d="M3 6l13-3 4 14-13 4z" fill="#fff3d6"/><path d="M7 9l6-1M8 12l6-1M9 15l5-1" stroke="#a5642a"/><path d="M22 1l-7 9-1 4 3-2 6-9z" fill="#8b3a17"/></svg></button>
  </div>
  <div class="tray">
    <i class="bar2"></i><span>链接</span>
    <svg width="14" height="10"><path d="M1 8l6-6 6 6" stroke="#fff" stroke-width="1.500" fill="none"/></svg>
    <svg class="bat" width="18" height="14"><path d="M6.500 4.500h9v7h-9zM16 6h1v4h-1M1 3h5v3c0 3-5 3-5 0zM2 1v2M5 1v2M3.500 8v3H6" stroke="#fff" fill="none"/><path d="M8 6h6v4H8z" fill="#fff"/></svg>
    <svg width="16" height="16"><path d="M2 14C2 7 7 3 14 3M5 14c0-5 4-8 9-8M8 14c0-3 2-5 6-5" stroke="#ddd" stroke-width="1.300" fill="none"/><path d="M11 12h3v3h-3z" fill="#fff"/></svg>
    <svg width="18" height="16"><path d="M1.500 6h3l4-4v12l-4-4h-3zM11 5c2 2 2 4 0 6M13 3c3 3 3 7 0 10M15 1c4 4 4 10 0 14" stroke="#ddd" fill="none"/></svg>
    <svg width="24" height="14"><path d="M.5.500h22v12H.5z" stroke="#fff" fill="none"/><path d="M3 3.500h18M3 6.500h18M6 9.500h11" stroke="#fff" stroke-dasharray="2 1"/></svg>
    <span class="lang">中</span>
    <svg width="16" height="16"><use href="#sogou"/></svg>
    <div class="clock"><time>17:40</time><time>2018/8/2</time></div>
    <button class="note" aria-label="通知"><svg width="26" height="28"><path d="M1 2h16v12H9l-4 4v-4H1z" fill="#fff"/><path d="M4 5h10M4 8h10M4 11h10" stroke="#222"/><circle cx="16" cy="18" r="8" fill="#333" stroke="#777"/><text x="16" y="23" text-anchor="middle" fill="#fff" font-size="12" font-weight="bold">1</text></svg></button>
  </div>
</div>
</div>
</body>
</html>
```
FILE: styles.css
```css
* { box-sizing: border-box; }
body { margin: 0; font: 12px/16px "Open Sans", "Noto Sans CJK SC", sans-serif; color: #000; background: #f0f0f0; }
button, input, select { font: inherit; color: inherit; }
button { border: 0; background: none; padding: 0; margin: 0; white-space: nowrap; }
h1, h2, ul { margin: 0; padding: 0; font: inherit; }
ul { list-style: none; }
svg { flex: none; display: block; }
.defs { position: absolute; width: 0; height: 0; }
.i { width: 16px; height: 16px; }
.window { height: 100vh; min-height: 600px; display: flex; flex-direction: column; overflow: hidden; }

.titlebar { position: relative; flex: none; height: 24px; background: #fff; display: flex; align-items: center; padding: 0 20px 0 2px; gap: 5px; }
.titlebar h1 { flex: 1; white-space: nowrap; overflow: hidden; font-size: 13px; }
.winbtns { display: flex; gap: 34px; margin-top: -4px; }
.speed { position: absolute; left: 779px; top: -26px; width: 46px; height: 46px; border-radius: 50%; background: #42bd62; border: 2px solid #d8d8d8; box-shadow: 0 3px 5px #0004; color: #fff; font-weight: bold; text-align: center; padding-top: 23px; z-index: 2; }
.ime { position: absolute; right: 191px; top: 3px; height: 24px; width: 200px; padding: 0 4px 0 26px; border: 1px solid #a9bed6; background: #fff; display: flex; align-items: center; justify-content: space-between; color: #1d73c9; z-index: 2; }
.ime b { font-size: 15px; }
.ime-logo { position: absolute; left: -8px; top: -4px; width: 28px; height: 28px; }

.account { flex: none; height: 30px; display: flex; justify-content: flex-end; align-items: stretch; }
.tip { width: 187px; padding: 6px 0 0 28px; color: #2f6b00; text-decoration: none; background: linear-gradient(90deg, #f9f9f9, #f0f0f0); }
.user { width: 242px; padding: 0 4px 4px 6px; display: flex; align-items: center; gap: 4px; background: linear-gradient(90deg, #f9f9f9, #f0f0f0); }
.user .drop { margin-right: 5px; }
.user span { margin-right: 4px; }
.more { margin-left: auto; align-self: flex-start; font-size: 14px; line-height: 14px; font-weight: bold; padding: 0 3px; }

.tb { display: flex; align-items: center; gap: 7px; padding: 0 4px; background: linear-gradient(#fcfcfc, #efefef); border-radius: 3px; white-space: nowrap; }
.t { display: inline-flex; align-items: center; gap: 4px; height: 22px; }
.off { color: #838383; }
.on { border: 1px solid #0078d7; background: #dceaf5; padding: 0 3px; margin: 0 -4px; height: 23px; }
.drop::after, .combo::after { content: ""; border: 3px solid transparent; border-top: 4px solid currentColor; border-bottom: 0; margin: 0 0 0 2px; }
.tight::after { margin: 0 0 0 -1px; }
.only { margin: 0 0 0 -4px; }
.sep { width: 1px; height: 18px; background: #b5b5b5; margin: 0 -1px; flex: none; }
.grip { width: 2px; height: 16px; background: repeating-linear-gradient(#b4b4b4 0 2px, transparent 2px 4px); margin-right: -3px; flex: none; }

.mainbar { flex: none; height: 30px; display: flex; gap: 4px; }
.mainbar .tb { height: 28px; }
.file { width: 151px; }
.file .sep { height: 25px; }
.tools { width: 548px; }
.views { flex: 1; padding-left: 2px; }
.white { background: #fff; margin-right: -1px; }
.mainbar .more { padding: 0 4px 0 0; }

.body { flex: 1; min-height: 0; display: flex; }
.nav { width: 165px; flex: none; display: flex; flex-direction: column; border-right: 1px solid #aaa; padding-bottom: 1px; background: #f0f0f0; }
.nav-head { flex: none; height: 16px; border: 1px solid #8a8a8a; border-left: 0; display: flex; align-items: center; gap: 10px; padding-right: 3px; margin-bottom: 1px; }
.nav-head h2 { flex: 1; line-height: 14px; }
.tab { flex: none; height: 22px; border: 1px solid #9a9a9a; border-top-color: #fff; background: #f0f0f0; }
.nav-head + .tab { border-top-color: #9a9a9a; }
.treebar { flex: none; height: 27px; display: flex; align-items: center; padding-left: 7px; gap: 4px; background: linear-gradient(#f2f2f2, #fbfbfb); }
.treebox { flex: 1; min-height: 0; margin: 0 1px; border: 1px solid #828790; background: #fff; display: flex; padding: 1px 1px 2px 0; }
.tree { flex: 1; overflow: hidden; font-family: "Liberation Serif", "Noto Sans CJK SC", sans-serif; }
.g { display: flex; align-items: center; gap: 5px; height: 16px; }
.g::before { content: ""; width: 6px; height: 6px; margin: 0 5px 0 7px; border: solid #999; border-width: 1px 1px 0 0; transform: rotate(45deg); }
.g.open::before { border: solid #333; border-width: 0 1px 1px 0; margin-right: 5px; }
.tree ul { background: repeating-linear-gradient(#888 0 1px, transparent 1px 2px) 12px 0 / 1px 100% no-repeat, repeating-linear-gradient(#888 0 1px, transparent 1px 2px) 31px 0 / 1px 100% no-repeat; }
.tree li { display: flex; align-items: center; gap: 4px; height: 16px; padding-left: 43px; white-space: nowrap; background: repeating-linear-gradient(90deg, #888 0 1px, transparent 1px 2px) 31px 8px / 10px 1px no-repeat; }
.cur { display: flex; align-items: center; gap: 4px; background: #d9d9d9; padding-right: 7px; }
.vscroll { width: 16px; background: #f0f0f0; display: flex; flex-direction: column; }
.vtrack { flex: 1; }
.vthumb { margin-top: 80px; height: 65%; background: #cdcdcd; }

.work { flex: 1; min-width: 0; display: flex; flex-direction: column; padding-left: 5px; }
.bars { position: relative; flex: none; }
.row { display: flex; gap: 3px; height: 28px; }
.row .tb { height: 26px; padding-left: 5px; }
.row .tb + .tb { padding-left: 3px; }
.combos { display: flex; gap: 3px; margin: 0 5px 0 -2px; }
.combo { position: relative; display: flex; width: 69px; height: 23px; background: linear-gradient(90deg, #fff 0 84%, #f4f4f4 84%); }
.combo::after { position: absolute; right: 2px; top: 10px; }
.combo select { appearance: none; border: 0; background: none; width: 100%; padding: 0 12px 0 2px; }
.short { width: 57px; }
.blank { width: 55px; margin: 0 -2px; }
.stub { width: 29px; }
.mark { position: absolute; left: 257px; top: 12px; width: 106px; height: 54px; border: 7px solid #f00; }

.canvas { width: 100%; height: 305px; background: #000; }

.snapbar { flex: none; height: 32px; padding-top: 2px; }
.offsets { color: #6d6d6d; }
.offsets .combo { color: #000; }
.offsets label { display: flex; align-items: center; gap: 3px; }
.offsets .ck { gap: 8px; color: #000; }
.offsets .combo { margin-left: -1px; }
.offsets .sep { margin-right: -4px; }
.ck input { appearance: none; width: 12px; height: 12px; border: 1px solid #b0b0b0; margin: 0; }
.spin { position: relative; display: flex; width: 58px; height: 23px; border: 1px solid #7a7a7a; background: #f0f0f0; }
.spin.wide { width: 68px; }
.spin input { width: 100%; border: 0; background: none; text-align: right; padding: 0 18px 0 0; }
.spin::before, .spin::after { content: ""; position: absolute; right: 4px; border: 3px solid transparent; }
.spin::before { top: 4px; border-bottom: 4px solid #555; border-top: 0; }
.spin::after { bottom: 4px; border-top: 4px solid #555; border-bottom: 0; }

.rebar { flex: 1; min-height: 0; display: flex; gap: 2px; padding: 2px 1px 1px; }
.split { width: 10px; margin-left: 1px; flex: none; background: radial-gradient(circle at 2px 2px, #bbb 1px, transparent 1px) 0 0 / 4px 4px; }
.sheet { flex: 1; min-width: 0; display: flex; flex-direction: column; }
.sheetbar { flex: none; height: 26px; padding-left: 3px; background: linear-gradient(#fcfcfc, #f0f0f0); }
.sheetbar span { margin-left: 2px; }
.gridbox { flex: 1; min-height: 0; border: 1px solid #9a9a9a; background: #fff; display: flex; flex-direction: column; }
.gridview { flex: 1; min-height: 0; overflow: hidden; }
table { table-layout: fixed; border-collapse: collapse; width: 1194px; font-family: "Liberation Serif", "Noto Sans CJK SC", sans-serif; }
th { font-weight: normal; white-space: nowrap; overflow: hidden; background: linear-gradient(#fff, #f0f0f0); }
th, td { height: 19px; padding: 0; border: 1px solid #bdbdbd; border-top: 0; border-left: 0; line-height: 16px; }
thead th.hot, tbody th { background: linear-gradient(#fbd69a, #f5c163); color: #630063; }
td.act { background: #d9e9f7; border-left: 1px solid #000; }
.c33 { width: 33px; } .c36 { width: 36px; } .c38 { width: 38px; } .c39 { width: 39px; } .c49 { width: 49px; } .c57 { width: 57px; } .c61 { width: 61px; } .c70 { width: 70px; } .c72 { width: 72px; } .c156 { width: 156px; } .c166 { width: 166px; } .c201 { width: 201px; }
.hscroll { flex: none; height: 18px; display: flex; background: #f0f0f0; align-items: center; padding-right: 2px; }
.htrack { flex: 1; height: 15px; }
.hthumb { width: 72%; height: 15px; background: #cdcdcd; }

.status { flex: none; height: 22px; padding-top: 2px; display: flex; gap: 3px; background: #fff; font-family: "Liberation Serif", "Noto Sans CJK SC", sans-serif; }
.status span { border: 1px solid #d0d0d0; background: linear-gradient(#fff, #f0f0f0); padding: 0 1px; line-height: 18px; white-space: nowrap; overflow: hidden; }
.s1 { width: 147px; } .s2 { width: 77px; } .s3 { width: 98px; } .s4 { width: 47px; } .s5 { flex: 1; } .s6 { width: 70px; }

.taskbar { flex: none; height: 40px; background: #020b0e; display: flex; color: #fff; }
.start { width: 48px; background: #000; display: grid; place-items: center; }
.search { width: 344px; background: #333; display: flex; align-items: center; padding: 0 15px 0 8px; gap: 4px; }
.search input { flex: 1; min-width: 0; border: 0; background: none; font-size: 14px; padding: 0; }
.search input::placeholder { color: #9c9c9c; opacity: 1; }
.apps { display: flex; gap: 1px; }
.apps button { width: 48px; display: grid; place-items: center; border: solid transparent; border-width: 2px 0; }
.apps .pin { width: 50px; }
.apps .run { border-bottom-color: #76b9ed; width: 40px; margin: 0 4px; }
.apps .active { width: 48px; margin: 0; background: #343d3f; }
.w { color: #e9e9e9; }
.ieb { color: #45a5e8; --ring: #f5cf3a; }
.bar2 { width: 4px; height: 16px; align-self: center; border: solid #444; border-width: 0 1px; }
.apps .bar2 { margin: 0 12px 0 4px; }
.tray { margin-left: auto; display: flex; align-items: center; gap: 9px; padding-right: 4px; }
.bat { margin-left: 24px; }
.lang { margin-right: 4px; }
.clock { width: 56px; text-align: center; display: flex; flex-direction: column; line-height: 19px; margin-left: 10px; }
.note { padding: 8px 15px 4px 7px; border-right: 1px solid #666; }
```
